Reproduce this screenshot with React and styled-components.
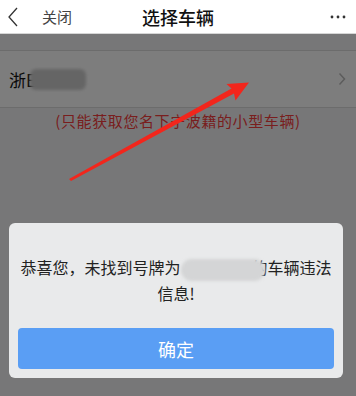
import React from "react";
import styled, { createGlobalStyle } from "styled-components";

const Global = createGlobalStyle`
  html, body { margin: 0; padding: 0; }
  body { font-family: "Noto Sans CJK SC", "Noto Sans", sans-serif; background: #fff; }
`;

const Page = styled.div`
  position: relative;
  width: 356px;
  height: 396px;
  overflow: hidden;
  display: flex;
  flex-direction: column;
  background: #fff;
`;

const Header = styled.div`
  height: 34px;
  flex: none;
  display: grid;
  grid-template-columns: 1fr auto 1fr;
  align-items: center;
  background: #fff;
  border-bottom: 1px solid #d6d6d6;
  box-sizing: border-box;
`;

const HeaderLeft = styled.div`
  display: flex;
  align-items: center;
  padding-left: 6px;
  gap: 22px;
`;

const CloseText = styled.span`
  font-size: 15px;
  color: #444;
`;

const Title = styled.div`
  font-size: 18px;
  font-weight: 500;
  color: #111;
`;

const HeaderRight = styled.div`
  display: flex;
  justify-content: flex-end;
  padding-right: 10px;
`;

const Content = styled.div`
  position: relative;
  flex: 1;
  background: #efeff1;
  padding-top: 16px;
  display: flex;
  flex-direction: column;
`;

const Row = styled.div`
  height: 58px;
  box-sizing: border-box;
  background: #fbfbfb;
  border-top: 1px solid #d8d8d8;
  border-bottom: 1px solid #d8d8d8;
  display: flex;
  align-items: center;
  justify-content: space-between;
  padding: 0 10px 0 9px;
  isolation: isolate;
`;

const Plate = styled.div`
  font-size: 17px;
  color: #111;
  display: flex;
  align-items: center;
`;

const Blur = styled.span`
  position: relative;
  z-index: 1;
  display: inline-block;
  width: ${(p) => p.$w}px;
  height: ${(p) => p.$h}px;
  margin-left: ${(p) => p.$ml}px;
  margin-right: ${(p) => p.$mr}px;
  border-radius: ${(p) => p.$r}px;
  background: ${(p) => p.$bg};
  filter: blur(1.5px);
  vertical-align: middle;
`;

const Note = styled.div`
  margin-top: 2px;
  text-align: center;
  font-size: 15px;
  letter-spacing: 0.6px;
  color: #f23c3c;
`;

const Overlay = styled.div`
  position: absolute;
  z-index: 2;
  inset: 0;
  background: rgba(0, 0, 0, 0.5);
  display: flex;
  flex-direction: column;
  justify-content: flex-end;
  padding: 0 0 18px 9px;
`;

const Dialog = styled.div`
  width: 334px;
  box-sizing: border-box;
  background: #e9eaeb;
  border-radius: 6px;
  padding: 32px 9px 9px;
  display: flex;
  flex-direction: column;
  isolation: isolate;
`;

const Message = styled.div`
  font-size: 16px;
  line-height: 24px;
  color: #222;
  text-align: center;
  white-space: nowrap;
`;

const Button = styled.div`
  margin-top: 23px;
  height: 41px;
  border-radius: 4px;
  background: #5a9ef4;
  color: #fff;
  font-size: 18px;
  display: flex;
  align-items: center;
  justify-content: center;
`;

const Annotation = styled.svg`
  position: absolute;
  z-index: 3;
  left: 0;
  top: 0;
  pointer-events: none;
`;

export default function App() {
  return (
    <>
      <Global />
      <Page>
        <Header>
          <HeaderLeft>
            <svg width="14" height="22" viewBox="0 0 14 22">
              <polyline points="11,2 3,11 11,20" fill="none" stroke="#333" strokeWidth="1.3" />
            </svg>
            <CloseText>关闭</CloseText>
          </HeaderLeft>
          <Title>选择车辆</Title>
          <HeaderRight>
            <svg width="16" height="4" viewBox="0 0 16 4">
              <circle cx="2" cy="2" r="1.4" fill="#333" />
              <circle cx="8" cy="2" r="1.4" fill="#333" />
              <circle cx="14" cy="2" r="1.4" fill="#333" />
            </svg>
          </HeaderRight>
        </Header>
        <Content>
          <Row>
            <Plate>
              浙E
              <Blur $w={56} $h={21} $r={6} $ml={-6} $mr={0} $bg="#cbcbcb" />
            </Plate>
            <svg width="8" height="14" viewBox="0 0 8 14">
              <polyline points="1.5,1.5 6.5,7 1.5,12.5" fill="none" stroke="#b8b8b8" strokeWidth="1.5" />
            </svg>
          </Row>
          <Note>(只能获取您名下宁波籍的小型车辆)</Note>
          <Overlay>
            <Dialog>
              <Message>
                恭喜您，未找到号牌为
                <Blur $w={84} $h={22} $r={11} $ml={0} $mr={-13} $bg="#d4d5d6" />
                的车辆违法
                <br />
                信息!
              </Message>
              <Button>确定</Button>
            </Dialog>
          </Overlay>
        </Content>
        <Annotation width="356" height="396" viewBox="0 0 356 396">
          <polygon
            points="69,179 231.5,88.5 226.5,84 249,82.5 235.5,100.5 234,93.5 71,181"
            fill="#f2261c"
          />
        </Annotation>
      </Page>
    </>
  );
}
